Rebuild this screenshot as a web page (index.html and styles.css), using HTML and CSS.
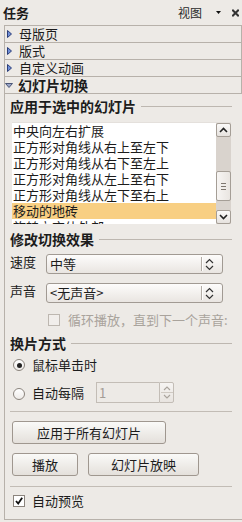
FILE: index.html
```html
<!DOCTYPE html>
<html>
<head>
<meta charset="utf-8">
<link rel="stylesheet" href="styles.css">
</head>
<body>
<div class="titlebar">
  <span class="title">任务</span>
  <span class="view">视图</span>
  <svg class="drop" width="5" height="3" viewBox="0 0 5 3"><path d="M0 0H5L2.5 3Z" fill="#111"/></svg>
  <svg class="close" width="7" height="8" viewBox="0 0 7 8"><path d="M1 1.5L6 6.5M6 1.5L1 6.5" stroke="#333" stroke-width="2" stroke-linecap="square"/></svg>
</div>
<div class="headers">
  <div class="hrow"><svg class="tri" width="5" height="8" viewBox="0 0 5 8"><path d="M0.5 0.5L4.5 4L0.5 7.5Z" fill="#6f8fd8" stroke="#2c3f7a" stroke-width="1"/></svg><span>母版页</span></div>
  <div class="hrow"><svg class="tri" width="5" height="8" viewBox="0 0 5 8"><path d="M0.5 0.5L4.5 4L0.5 7.5Z" fill="#6f8fd8" stroke="#2c3f7a" stroke-width="1"/></svg><span>版式</span></div>
  <div class="hrow"><svg class="tri" width="5" height="8" viewBox="0 0 5 8"><path d="M0.5 0.5L4.5 4L0.5 7.5Z" fill="#6f8fd8" stroke="#2c3f7a" stroke-width="1"/></svg><span>自定义动画</span></div>
  <div class="hrow open"><svg class="tri-down" width="8" height="5" viewBox="0 0 8 5"><path d="M0.5 0.5H7.5L4 4.5Z" fill="#9aa6c8" stroke="#4b5676" stroke-width="1"/></svg><span>幻灯片切换</span></div>
</div>
<div class="panel">
  <div class="sec">应用于选中的幻灯片</div>
  <div class="listbox">
    <ul class="items">
      <li>中央向左右扩展</li>
      <li>正方形对角线从右上至左下</li>
      <li>正方形对角线从右下至左上</li>
      <li>正方形对角线从左上至右下</li>
      <li>正方形对角线从左下至右上</li>
      <li class="sel">移动的地砖</li>
      <li>旋转立方体外部</li>
    </ul>
    <div class="vscroll">
      <div class="sbtn"><svg width="9" height="6" viewBox="0 0 9 6"><path d="M1 5L4.5 1.5L8 5" fill="none" stroke="#222" stroke-width="1.6"/></svg></div>
      <div class="track">
        <div class="thumb"><span></span><span></span><span></span></div>
      </div>
      <div class="sbtn"><svg width="9" height="6" viewBox="0 0 9 6"><path d="M1 1L4.5 4.5L8 1" fill="none" stroke="#222" stroke-width="1.6"/></svg></div>
    </div>
  </div>

  <div class="sec sec2">修改切换效果</div>
  <div class="field">
    <span class="lbl">速度</span>
    <div class="combo"><span class="ctext">中等</span><span class="csep"></span><svg class="carr" width="9" height="13" viewBox="0 0 9 13"><path d="M1 5L4.5 1.5L8 5M1 8L4.5 11.5L8 8" fill="none" stroke="#333" stroke-width="1.2"/></svg></div>
  </div>
  <div class="field field2">
    <span class="lbl">声音</span>
    <div class="combo"><span class="ctext">&lt;无声音&gt;</span><span class="csep"></span><svg class="carr" width="9" height="13" viewBox="0 0 9 13"><path d="M1 5L4.5 1.5L8 5M1 8L4.5 11.5L8 8" fill="none" stroke="#333" stroke-width="1.2"/></svg></div>
  </div>
  <div class="loop">
    <span class="cbox disabled"></span>
    <span class="looptext">循环播放，直到下一个声音:</span>
  </div>

  <div class="sec sec3">换片方式</div>
  <div class="opt opt1">
    <span class="radio on"></span><span>鼠标单击时</span>
  </div>
  <div class="opt opt2">
    <span class="radio"></span><span>自动每隔</span>
    <div class="spin">
      <span class="spintext">1</span>
      <div class="spinbtns">
        <svg width="14" height="19" viewBox="0 0 14 19"><path d="M4 7L7 4L10 7M4 12L7 15L10 12" fill="none" stroke="#a9a39c" stroke-width="1.1"/><path d="M1 9.5H13" stroke="#cfc9c2"/></svg>
      </div>
    </div>
  </div>
  <div class="hsep sep1"></div>
  <button class="btn wide">应用于所有幻灯片</button>
  <div class="btnrow">
    <button class="btn play">播放</button>
    <button class="btn show">幻灯片放映</button>
  </div>
  <div class="hsep sep2"></div>
  <div class="opt preview">
    <span class="cbox checked"><svg width="10" height="10" viewBox="0 0 10 10"><path d="M2 5L4.2 7.6L8.2 1.8" fill="none" stroke="#111" stroke-width="1.8"/></svg></span><span>自动预览</span>
  </div>
</div>
</body>
</html>
```
FILE: styles.css
```css
* { box-sizing: border-box; }
html, body { margin: 0; padding: 0; }
body {
  width: 242px;
  height: 522px;
  overflow: hidden;
  background: #edeae6;
  font-family: "Noto Sans CJK SC", "Noto Sans", sans-serif;
  font-size: 13px;
  line-height: 16px;
  color: #1c1c1c;
}

.titlebar {
  height: 25px;
  display: flex;
  align-items: center;
  padding: 0 3px;
}
.title { flex: 1; font-weight: bold; font-size: 13px; }
.view { font-size: 12px; margin-right: 14px; color: #2a2a2a; }
.drop { margin-right: 11px; }
.close { display: block; }

.headers { margin-left: 4px; }
.hrow {
  height: 17px;
  border: 1px solid #b7b1aa;
  border-bottom: none;
  display: flex;
  align-items: center;
}
.hrow:last-child { height: 18px; border-bottom: 1px solid #b7b1aa; }
.tri { margin-left: 2px; margin-right: 7px; flex: none; }
.tri-down { margin-left: 0; margin-right: 5px; flex: none; }
.hrow.open span { font-weight: bold; font-size: 14px; }

.panel {
  margin-left: 4px;
  height: 426px;
  border-left: 1px solid #b7b1aa;
  border-bottom: 1px solid #b7b1aa;
  padding: 4px 10px 0 5px;
}

.sec {
  display: flex;
  align-items: center;
  font-weight: bold;
  font-size: 14px;
  height: 16px;
  white-space: nowrap;
}
.sec::after {
  content: "";
  flex: 1;
  height: 1px;
  background: #bdb7b0;
  margin-left: 5px;
}
.sec2 { margin-top: 7px; }
.sec3 { margin-top: 7px; }

.listbox {
  margin: 8px 1px 0 2px;
  height: 102px;
  display: flex;
  background: #fff;
  border-top: 1px solid #e4e0dc;
}
.items {
  list-style: none;
  margin: 0;
  padding: 0;
  flex: 1;
  overflow: hidden;
}
.items li {
  height: 16px;
  padding-left: 1px;
  white-space: nowrap;
}
.items li.sel { background: #f8cf83; }

.vscroll {
  width: 15px;
  display: flex;
  flex-direction: column;
  background: #d9d3cd;
}
.sbtn {
  height: 14px;
  border: 1px solid #a59e96;
  border-radius: 2px;
  background: linear-gradient(#fbfaf9, #e6e2de);
  display: flex;
  align-items: center;
  justify-content: center;
}
.track {
  flex: 1;
  display: flex;
  flex-direction: column;
  padding-top: 34px;
}
.thumb {
  height: 30px;
  border: 1px solid #a59e96;
  border-radius: 2px;
  background: linear-gradient(90deg, #f7f5f3, #e9e5e1);
  display: flex;
  flex-direction: column;
  align-items: center;
  justify-content: center;
  gap: 2px;
}
.thumb span { width: 5px; height: 1px; background: #7d766f; }

.field {
  display: flex;
  align-items: center;
  margin-top: 7px;
  height: 20px;
}
.field2 { margin-top: 9px; }
.lbl { width: 36px; flex: none; margin-top: -4px; }
.combo {
  width: 177px;
  height: 20px;
  border: 1px solid #a19a93;
  border-radius: 3px;
  background: linear-gradient(#fdfcfb, #e9e5e1);
  display: flex;
  align-items: center;
  padding-left: 3px;
}
.ctext { flex: 1; }
.csep {
  width: 2px;
  height: 14px;
  border-left: 1px solid #b3ada6;
  border-right: 1px solid #fff;
  margin-right: 2px;
}
.carr { margin-right: 8px; }

.loop {
  display: flex;
  align-items: center;
  margin-top: 9px;
  height: 16px;
  padding-left: 38px;
  width: 221px;
  overflow: hidden;
  white-space: nowrap;
}
.looptext { color: #a9a39c; margin-left: 8px; }

.cbox {
  width: 12px;
  height: 12px;
  flex: none;
  border: 1px solid #8b847d;
  background: #fff;
  display: flex;
  align-items: center;
  justify-content: center;
}
.cbox.disabled { border-color: #bdb7b0; background: #f1eeeb; }

.opt {
  display: flex;
  align-items: center;
  padding-left: 3px;
}
.opt1 { margin-top: 6px; height: 16px; }
.opt2 { margin-top: 9px; height: 21px; }
.radio {
  width: 12px;
  height: 12px;
  flex: none;
  border-radius: 50%;
  border: 1px solid #8b847d;
  background: linear-gradient(#fff, #eeebe8);
  margin-right: 7px;
  display: flex;
  align-items: center;
  justify-content: center;
}
.radio.on::after {
  content: "";
  width: 5px;
  height: 5px;
  border-radius: 50%;
  background: #222;
}
.opt2 .radio { margin-top: 2px; }
.opt2 > span:nth-child(2) { margin-top: 1px; }

.spin {
  margin-left: 12px;
  width: 78px;
  height: 21px;
  display: flex;
}
.spintext {
  flex: 1;
  border: 1px solid #c3bdb6;
  border-right: none;
  background: #edeae6;
  color: #a39d96;
  padding-left: 2px;
  line-height: 19px;
}
.spinbtns {
  width: 15px;
  border: 1px solid #c3bdb6;
  border-radius: 0 2px 2px 0;
  background: linear-gradient(#f6f4f2, #e8e4e0);
}
.spinbtns svg { display: block; }

.hsep {
  height: 1px;
  background: #c2bcb5;
  margin-top: 8px;
}
.sep2 { margin-top: 10px; }

.btn {
  display: block;
  font: inherit;
  color: #1c1c1c;
  height: 23px;
  padding: 0;
  border: 1px solid #9f978f;
  border-radius: 3px;
  background: linear-gradient(#fafaf8, #e4e0db);
  text-align: center;
}
.wide { margin: 9px 0 0 2px; width: 154px; }
.btnrow { display: flex; gap: 10px; margin: 9px 0 0 2px; }
.play { width: 66px; }
.show { width: 111px; }

.preview { margin-top: 6px; height: 16px; }
.preview .cbox { margin-right: 7px; }
```
